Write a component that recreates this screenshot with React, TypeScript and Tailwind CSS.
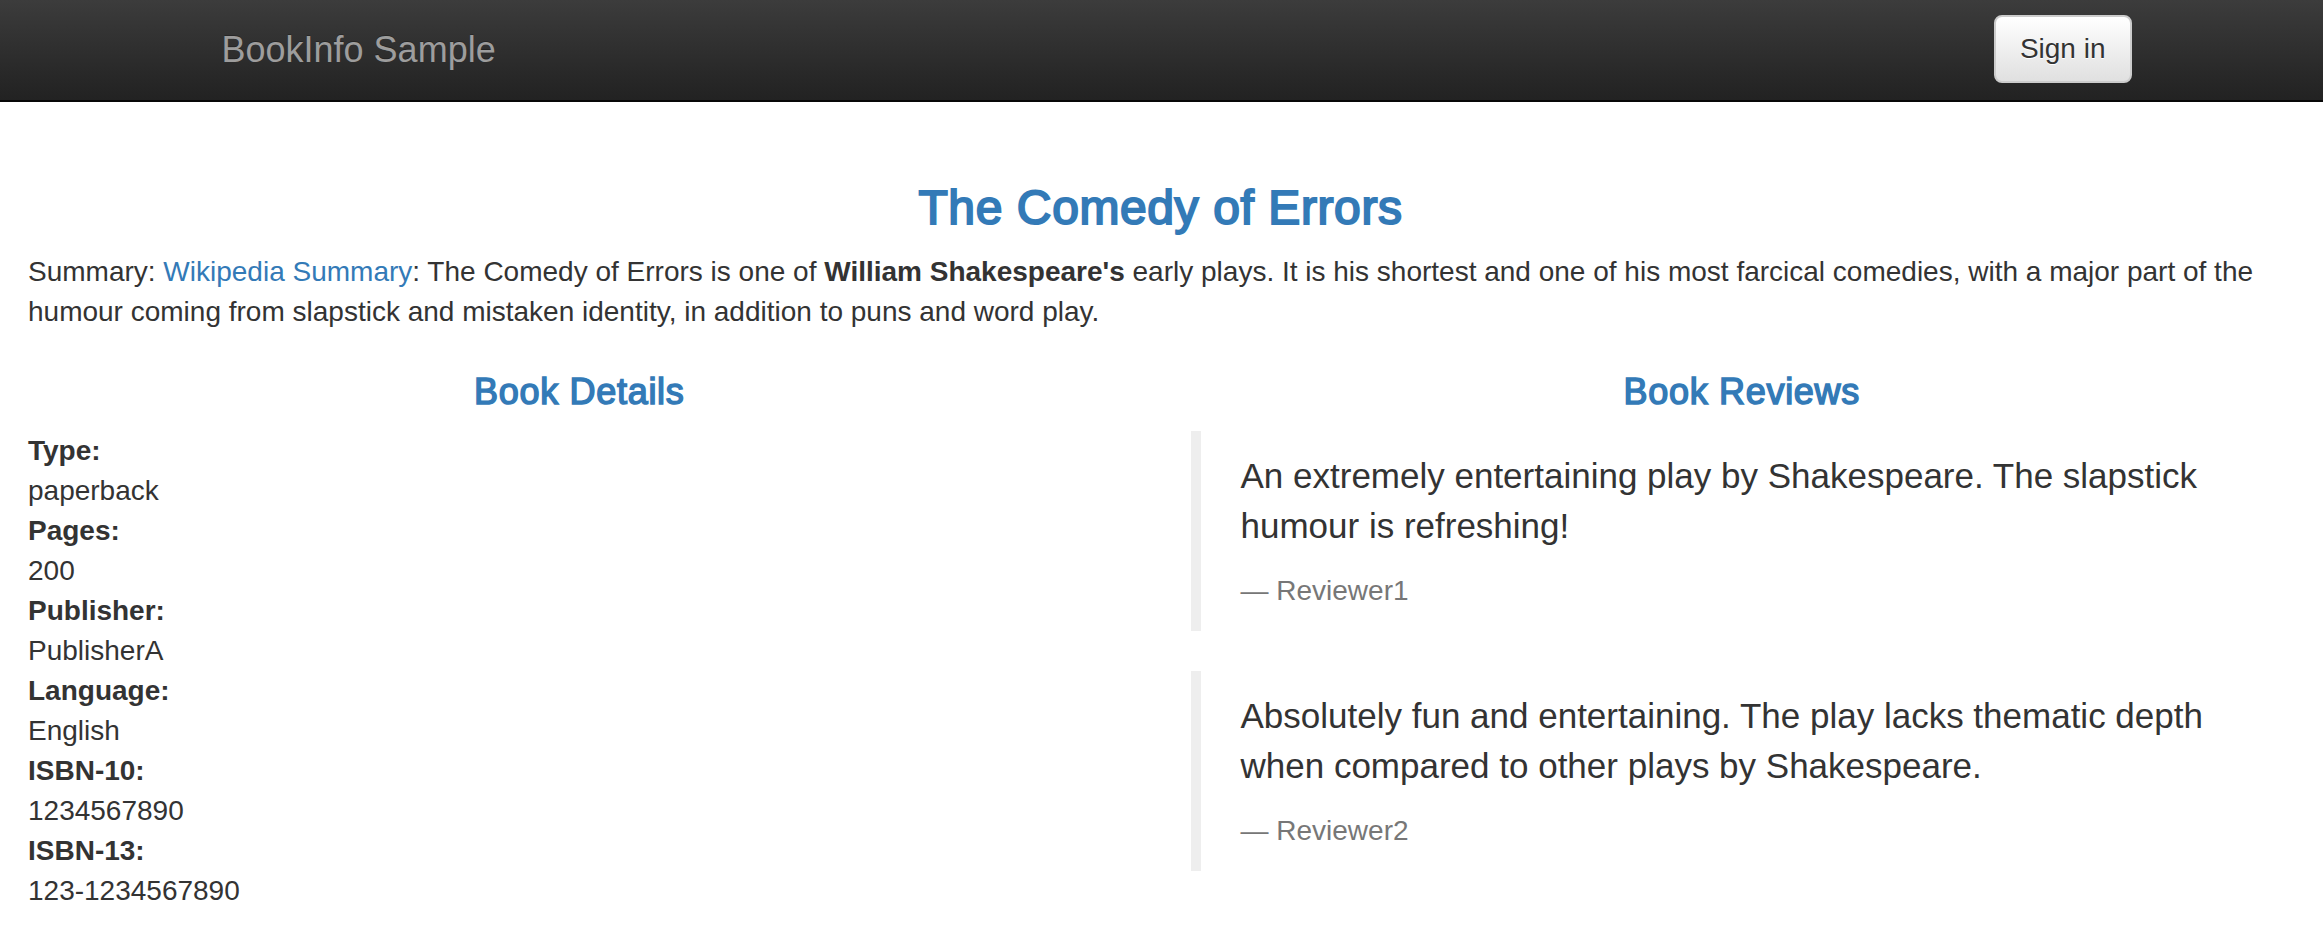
/**
 * BookInfo product page
 * Bootstrap-3 style layout drawn at 2x scale
 */

const details = [
  { label: 'Type:', value: 'paperback' },
  { label: 'Pages:', value: '200' },
  { label: 'Publisher:', value: 'PublisherA' },
  { label: 'Language:', value: 'English' },
  { label: 'ISBN-10:', value: '1234567890' },
  { label: 'ISBN-13:', value: '123-1234567890' },
]

const reviews = [
  {
    text: 'An extremely entertaining play by Shakespeare. The slapstick humour is refreshing!',
    reviewer: 'Reviewer1',
  },
  {
    text: 'Absolutely fun and entertaining. The play lacks thematic depth when compared to other plays by Shakespeare.',
    reviewer: 'Reviewer2',
  },
]

function Navbar() {
  return (
    <nav className="h-[102px] border-b-2 border-[#080808] bg-gradient-to-b from-[#3c3c3c] to-[#222222]">
      <div className="mx-auto flex w-[1940px] items-start justify-between px-[30px]">
        {/* Brand */}
        <a className="block h-[100px] py-[30px] text-[36px] leading-[40px] text-[#9d9d9d] [text-shadow:0_-1px_0_rgba(0,0,0,0.25)]">
          BookInfo Sample
        </a>

        {/* Sign in button */}
        <button className="mt-[15px] mr-[-30px] h-[68px] rounded-[8px] border-2 border-[#cccccc] bg-gradient-to-b from-white to-[#e0e0e0] px-[24px] text-[28px] leading-[40px] text-[#333333] [text-shadow:0_1px_0_#fff]">
          Sign in
        </button>
      </div>
    </nav>
  )
}

function SectionTitle({ children }: { children: string }) {
  return (
    <h4 className="mt-[20px] mb-[20px] text-center text-[36px] leading-[1.1] font-normal tracking-[0.7px] text-[#337ab7] [-webkit-text-stroke:1.5px_#337ab7]">
      {children}
    </h4>
  )
}

function BookDetails() {
  return (
    <div>
      <SectionTitle>Book Details</SectionTitle>
      <dl className="mb-[40px] text-[28px] leading-[40px]">
        {details.map((d) => (
          <div key={d.label}>
            <dt className="font-bold">{d.label}</dt>
            <dd>{d.value}</dd>
          </div>
        ))}
      </dl>
    </div>
  )
}

function BookReviews() {
  return (
    <div>
      <SectionTitle>Book Reviews</SectionTitle>
      {reviews.map((r) => (
        <blockquote
          key={r.reviewer}
          className="mb-[40px] border-l-[10px] border-[#eeeeee] px-[40px] py-[20px] text-[35px] leading-[50px]"
        >
          <p className="mb-[20px]">{r.text}</p>
          <small className="block text-[28px] leading-[40px] text-[#777777]">
            {'\u2014\u00a0'}
            {r.reviewer}
          </small>
        </blockquote>
      ))}
    </div>
  )
}

export default function App() {
  return (
    <div className="min-h-screen bg-white font-['Liberation_Sans',Arial,sans-serif] text-[#333333]">
      <Navbar />

      <main className="pr-[30px] pl-[28px] pt-[80px]">
        <h3 className="mb-[17px] text-center text-[48px] leading-[1.1] font-normal tracking-[0.6px] text-[#337ab7] [-webkit-text-stroke:2px_#337ab7]">
          The Comedy of Errors
        </h3>

        <p className="mb-[20px] text-[28px] leading-[40px]">
          Summary: <a className="text-[#337ab7]">Wikipedia Summary</a>: The Comedy of Errors is one of{' '}
          <b>William Shakespeare's</b> early plays. It is his shortest and one of his most farcical comedies,
          with a major part of the humour coming from slapstick and mistaken identity, in addition to puns and
          word play.
        </p>

        <div className="grid grid-cols-2 gap-[60px]">
          <BookDetails />
          <BookReviews />
        </div>
      </main>
    </div>
  )
}
